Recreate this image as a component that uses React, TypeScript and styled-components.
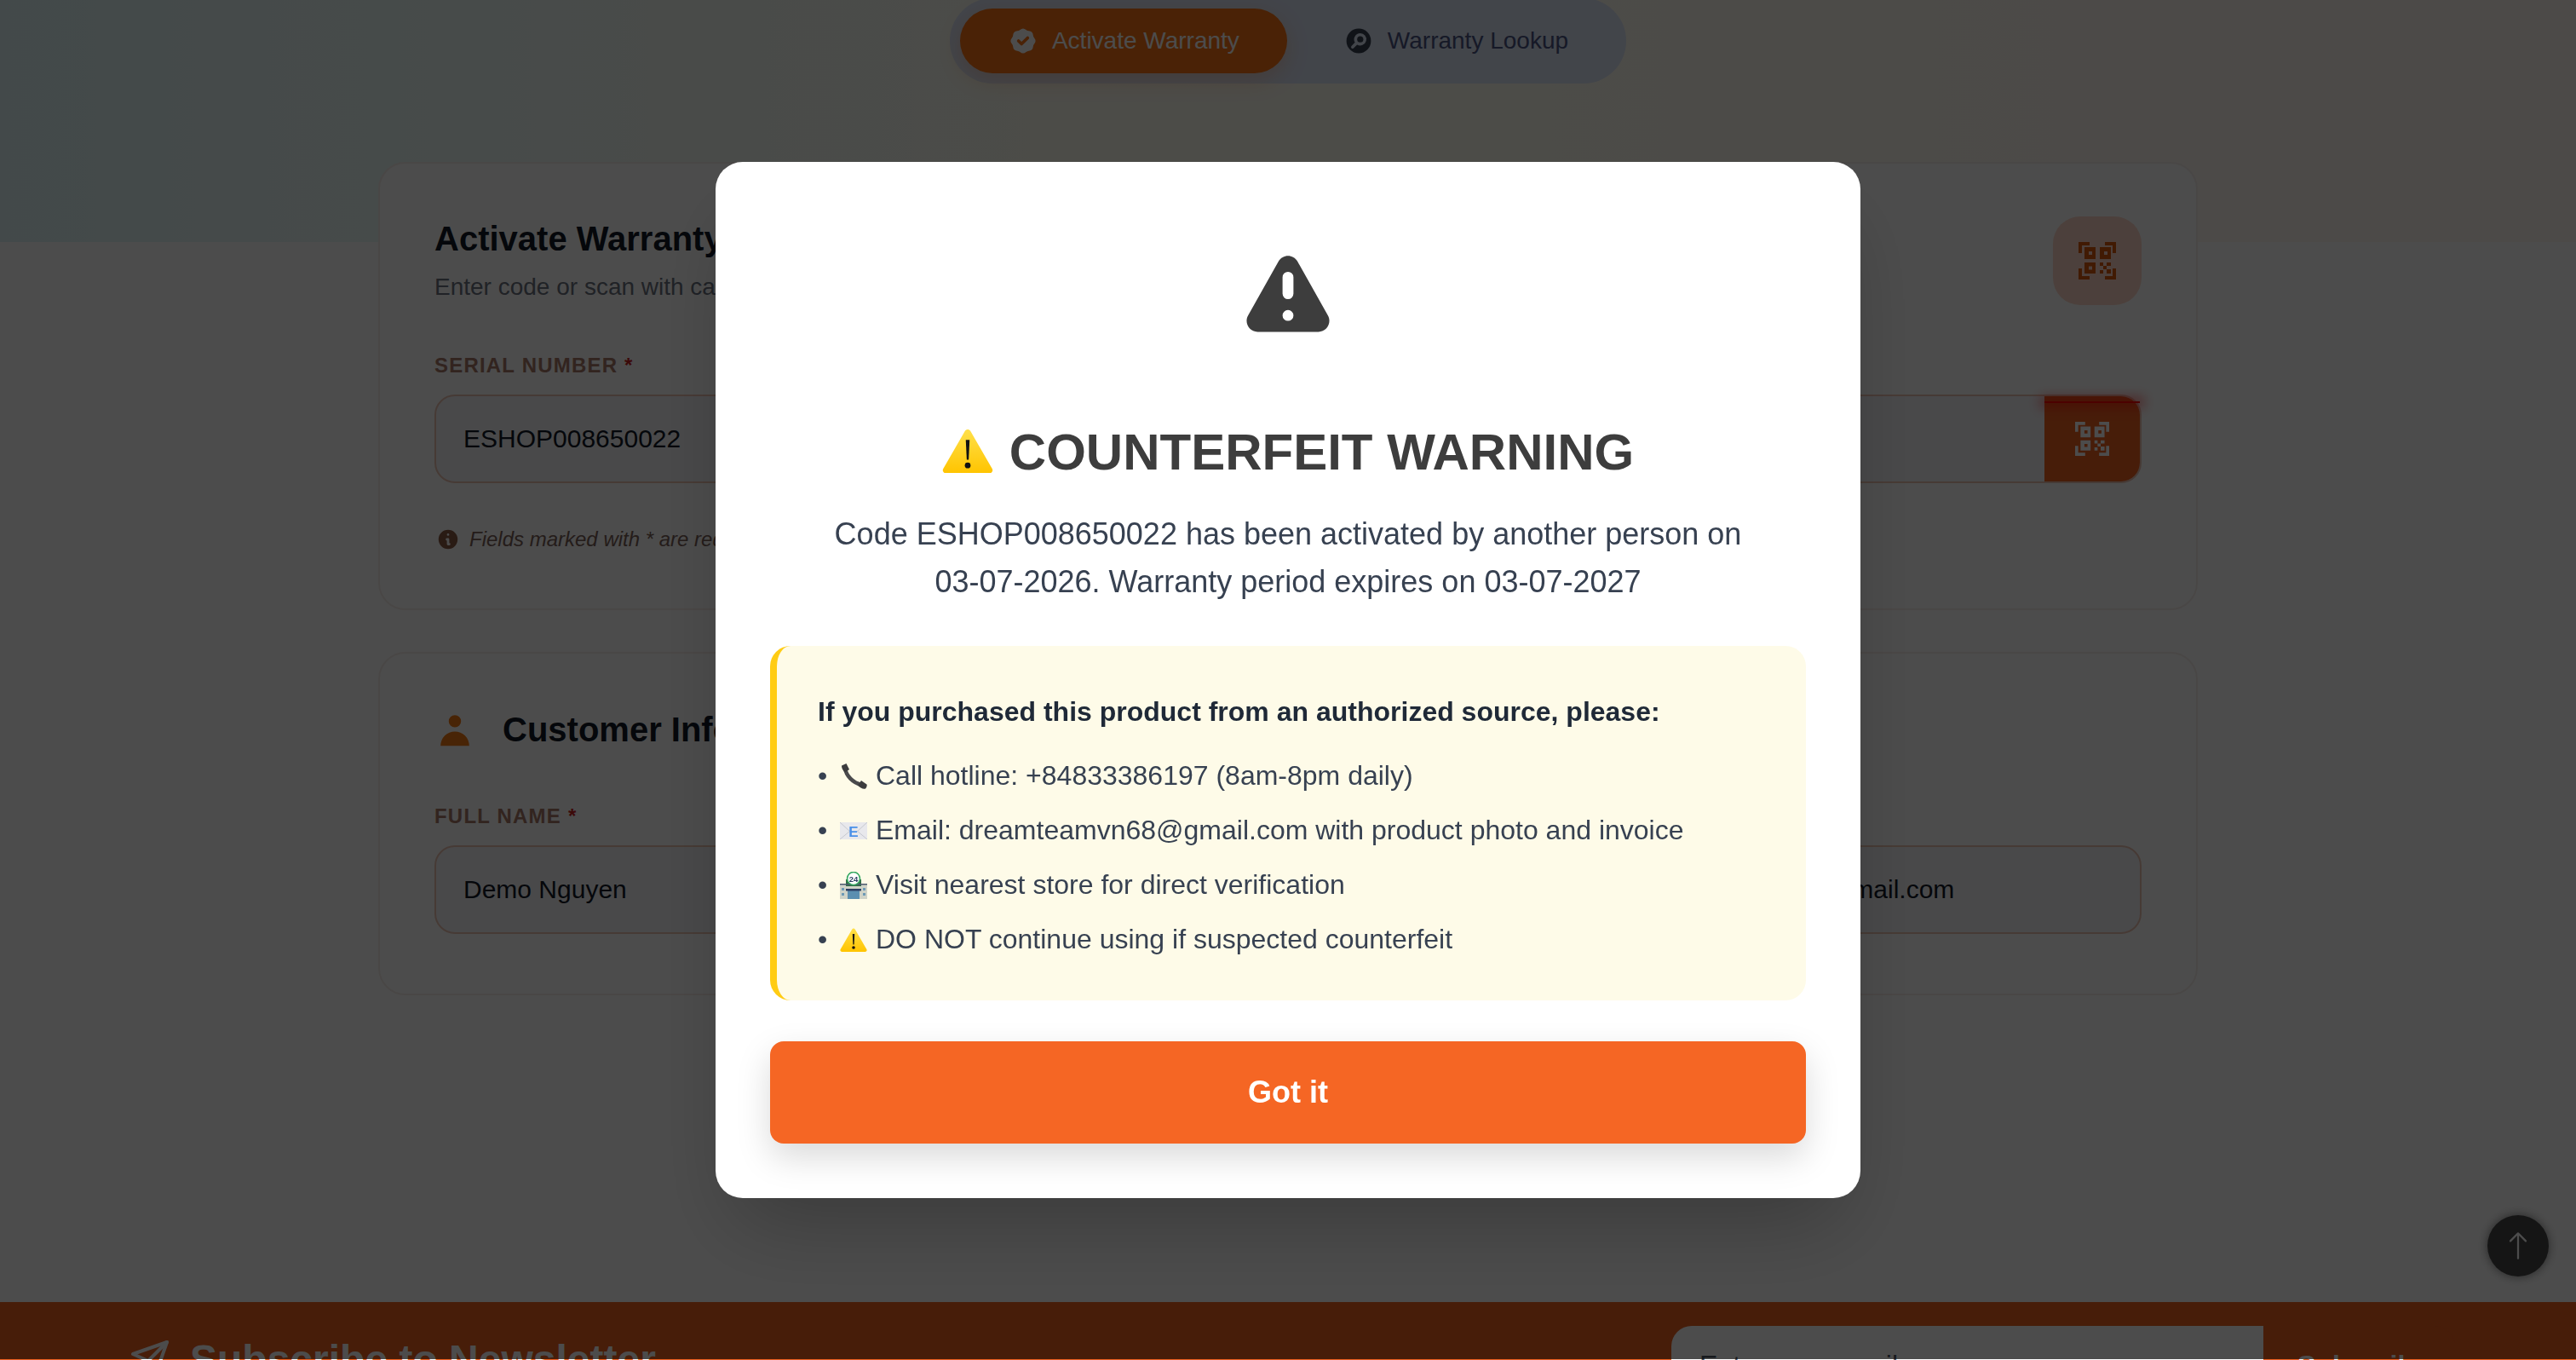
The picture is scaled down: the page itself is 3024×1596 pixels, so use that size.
import styled, { createGlobalStyle } from "styled-components";
import { HiBadgeCheck, HiExclamation, HiInformationCircle, HiSearchCircle, HiUser } from "react-icons/hi";
import { BsArrowUp } from "react-icons/bs";
import { FiSend } from "react-icons/fi";

function QrIcon({ size }: { size: number }) {
  return (
    <svg width={size} height={size} viewBox="0 0 44 44" fill="currentColor" fillRule="evenodd">
      <path d="M0 0h13v4H4v9H0zM44 0H31v4h9v9h4zM0 44h13v-4H4v-9H0zM44 44H31v-4h9v-9h4z" />
      <path d="M7 6h13v14H7zM12 11v4h4v-4zM25 6h13v14H25zM30 11v4h4v-4zM7 24h13v13H7zM12 28.500v4h4v-4z" />
      <path d="M25 24h4v4h-4zM33 24h5v4h-5zM29 28h4v4h-4zM33 32h5v5h-5zM25 33h4v4h-4z" />
    </svg>
  );
}

function WarnEmoji({ size }: { size: number }) {
  return (
    <svg width={size} height={size * 0.875} viewBox="0 0 64 56">
      <defs>
        <linearGradient id={`warn${size}`} x1="0" y1="0" x2="0" y2="1">
          <stop offset="0" stopColor="#ffe04a" />
          <stop offset="1" stopColor="#ffc400" />
        </linearGradient>
      </defs>
      <path d="M28.6 3 1.4 50c-1.6 2.8.3 6 3.4 6h54.4c3.1 0 5-3.2 3.4-6L35.400 3c-1.500-2.700-5.300-2.700-6.800 0z" fill={`url(#warn${size})`} />
      <path d="M29.600 14h4.800l-1.200 25h-2.400z" fill="#111" />
      <circle cx="32" cy="46" r="3.600" fill="#111" />
    </svg>
  );
}

function PhoneEmoji() {
  return (
    <svg width="32" height="32" viewBox="0 0 32 32">
      <path d="M6 6c1 9 9 18 20 20" fill="none" stroke="#4a4a4c" strokeWidth="4.500" strokeLinecap="round" />
      <path d="M2 3.500 7.500 1l3.500 7-5 3.500C3 9 2 6 2 3.500z" fill="#3c3c3e" />
      <path d="M21 26.500l4-5.500 6.500 4.500c.5 1 0 3.500-1.500 5-3 .8-6.500-1-9-4z" fill="#3c3c3e" />
    </svg>
  );
}

function MailEmoji() {
  return (
    <svg width="32" height="20" viewBox="0 0 32 20">
      <rect width="32" height="20" rx="1" fill="#e8e8ec" />
      <path d="M0 0l12 11M32 0 20 11M0 20l12-10M32 20 20 10" stroke="#c6c8cf" strokeWidth="1" />
      <text x="16" y="17" textAnchor="middle" fontFamily="Liberation Sans" fontWeight="700" fontSize="17" fill="#4a90e8">E</text>
    </svg>
  );
}

function StoreEmoji() {
  return (
    <svg width="32" height="32" viewBox="0 0 32 32">
      <rect x="0" y="15" width="32" height="17" fill="#cfd3c8" />
      <rect x="7" y="9" width="18" height="8" fill="#2f6b45" />
      <rect x="0" y="14" width="32" height="1.500" fill="#4c5a70" />
      <rect x="9" y="22" width="14" height="10" fill="#5b8fb0" />
      <rect x="7" y="20" width="18" height="2.500" fill="#2d3f63" />
      <rect x="2" y="19" width="3" height="3" fill="#6d9ab5" />
      <rect x="2" y="25" width="3" height="3" fill="#6d9ab5" />
      <rect x="27" y="19" width="3" height="3" fill="#6d9ab5" />
      <rect x="27" y="25" width="3" height="3" fill="#6d9ab5" />
      <circle cx="16" cy="8" r="7.500" fill="#fff" stroke="#35a860" strokeWidth="1.600" />
      <text x="16" y="11.500" textAnchor="middle" fontFamily="Liberation Sans" fontWeight="700" fontSize="9.500" fill="#2d3f63">24</text>
    </svg>
  );
}

export default function App() {
  return (
    <>
      <GlobalStyle />
      <Page>
        <Tabs>
          <Tab $active>
            <HiBadgeCheck size={36} />
            Activate Warranty
          </Tab>
          <Tab>
            <HiSearchCircle size={36} />
            Warranty Lookup
          </Tab>
        </Tabs>

        <Card>
          <CardHead>
            <div>
              <CardTitle>Activate Warranty</CardTitle>
              <CardSub>Enter code or scan with camera</CardSub>
            </div>
            <QrBox>
              <QrIcon size={44} />
            </QrBox>
          </CardHead>
          <Label>
            Serial Number <Req>*</Req>
          </Label>
          <InputShell>
            <Field readOnly value="ESHOP008650022" />
            <ScanButton>
              <ScanLine />
              <QrIcon size={40} />
            </ScanButton>
          </InputShell>
          <Hint>
            <HiInformationCircle size={28} />
            Fields marked with * are required
          </Hint>
        </Card>

        <Card $second>
          <SectionTitle>
            <HiUser size={48} />
            Customer Information
          </SectionTitle>
          <FieldGrid>
            <div>
              <Label>
                Full Name <Req>*</Req>
              </Label>
              <InputShell>
                <Field readOnly value="Demo Nguyen" />
              </InputShell>
            </div>
            <div>
              <Label>
                Phone Number <Req>*</Req>
              </Label>
              <InputShell>
                <Field readOnly value="0912345678" />
              </InputShell>
            </div>
            <div>
              <Label>Email</Label>
              <InputShell>
                <Field readOnly value="demo.nguyen12@gmail.com" />
              </InputShell>
            </div>
          </FieldGrid>
        </Card>

        <Footer>
          <FooterTitle>
            <FiSend size={48} />
            Subscribe to Newsletter
          </FooterTitle>
          <SubscribeForm>
            <EmailInput placeholder="Enter your email" />
            <SubscribeButton>Subscribe</SubscribeButton>
          </SubscribeForm>
        </Footer>

        <ScrollTop>
          <BsArrowUp size={36} />
        </ScrollTop>
      </Page>

      <Overlay>
        <Modal>
          <BigIcon>
            <HiExclamation size={128} />
          </BigIcon>
          <ModalTitle>
            <WarnEmoji size={60} />
            COUNTERFEIT WARNING
          </ModalTitle>
          <ModalText>
            Code ESHOP008650022 has been activated by another person on
            <br />
            03-07-2026. Warranty period expires on 03-07-2027
          </ModalText>
          <Notice>
            <NoticeHead>If you purchased this product from an authorized source, please:</NoticeHead>
            <NoticeItem>
              <Bullet>•</Bullet>
              <EmojiSlot><PhoneEmoji /></EmojiSlot>
              Call hotline: +84833386197 (8am-8pm daily)
            </NoticeItem>
            <NoticeItem>
              <Bullet>•</Bullet>
              <EmojiSlot><MailEmoji /></EmojiSlot>
              Email: dreamteamvn68@gmail.com with product photo and invoice
            </NoticeItem>
            <NoticeItem>
              <Bullet>•</Bullet>
              <EmojiSlot><StoreEmoji /></EmojiSlot>
              Visit nearest store for direct verification
            </NoticeItem>
            <NoticeItem>
              <Bullet>•</Bullet>
              <EmojiSlot><WarnEmoji size={32} /></EmojiSlot>
              DO NOT continue using if suspected counterfeit
            </NoticeItem>
          </Notice>
          <GotIt>Got it</GotIt>
        </Modal>
      </Overlay>
    </>
  );
}

const GlobalStyle = createGlobalStyle`
  html, body {
    margin: 0;
    height: 100%;
    overflow: hidden;
    background: #fff;
    font-family: "Liberation Sans", Arial, sans-serif;
  }
  * {
    box-sizing: border-box;
  }
`;

const Page = styled.div`
  position: relative;
  height: 1596px;
  overflow: hidden;
  display: flex;
  flex-direction: column;
  align-items: center;
  background:
    linear-gradient(90deg, #e0f6f8 0%, #eefbf8 18%, #fdfdf2 40%, #fffdf2 60%, #fff9f2 80%, #fff7f2 100%) top / 100% 284px no-repeat,
    #fff;
`;

const Tabs = styled.nav`
  display: flex;
  gap: 10px;
  height: 100px;
  margin-top: -2px;
  padding: 12px;
  border-radius: 50px;
  background: #dde6f8;
`;

const Tab = styled.div<{ $active?: boolean }>`
  display: flex;
  align-items: center;
  gap: 16px;
  height: 76px;
  padding: 0 56px;
  border-radius: 38px;
  font-size: 28px;
  color: ${(p) => (p.$active ? "#fff" : "#4b5583")};
  background: ${(p) => (p.$active ? "#f77214" : "transparent")};
  box-shadow: ${(p) => (p.$active ? "0 8px 24px rgba(247, 114, 20, 0.25)" : "none")};

  & svg {
    color: ${(p) => (p.$active ? "#fff" : "#374151")};
  }
`;

const Card = styled.section<{ $second?: boolean }>`
  width: 2136px;
  margin-top: ${(p) => (p.$second ? "49px" : "92px")};
  padding: ${(p) => (p.$second ? "62px 64px 70px" : "64px 64px 63px")};
  border: 2px solid #f6eeea;
  border-radius: 32px;
  background: #fff;
`;

const CardHead = styled.div`
  display: flex;
  justify-content: space-between;
  margin-bottom: 56px;
`;

const CardTitle = styled.h2`
  margin: 0;
  font-size: 40px;
  line-height: 48px;
  font-weight: 700;
  color: #111827;
`;

const CardSub = styled.p`
  margin: 15px 0 0;
  font-size: 28px;
  line-height: 36px;
  color: #6b7280;
`;

const QrBox = styled.div`
  display: flex;
  align-items: center;
  justify-content: center;
  width: 104px;
  height: 104px;
  margin-top: -2px;
  border-radius: 32px;
  background: #ffd8c8;
  color: #d9580a;
`;

const Label = styled.label`
  display: block;
  margin-bottom: 19px;
  font-size: 24px;
  line-height: 30px;
  font-weight: 700;
  letter-spacing: 1.200px;
  text-transform: uppercase;
  color: #a87868;
`;

const Req = styled.span`
  color: #c81e1e;
`;

const InputShell = styled.div`
  display: flex;
  height: 104px;
  border: 2px solid #ecc4b2;
  border-radius: 24px;
  background: #f4f4f8;
`;

const Field = styled.input`
  flex: 1;
  min-width: 0;
  padding: 0 32px;
  border: 0;
  outline: 0;
  background: transparent;
  font-family: inherit;
  font-size: 30px;
  color: #111827;
`;

const ScanButton = styled.div`
  position: relative;
  display: flex;
  align-items: center;
  justify-content: center;
  width: 112px;
  border-radius: 0 22px 22px 0;
  background: #ed6121;
  color: #fff;
`;

const ScanLine = styled.span`
  position: absolute;
  top: 6px;
  left: 0;
  right: 0;
  height: 2px;
  background: #ff0000;
  box-shadow: 0 0 14px 5px rgba(255, 0, 0, 0.5);
`;

const Hint = styled.p`
  display: flex;
  align-items: center;
  gap: 11px;
  margin: 48px 0 0;
  font-size: 24px;
  line-height: 36px;
  font-style: italic;
  color: #7a6058;

  & svg {
    margin-left: 2px;
    color: #8a5a44;
  }
`;

const SectionTitle = styled.h2`
  display: flex;
  align-items: center;
  gap: 32px;
  height: 54px;
  margin: 0 0 60px;
  font-size: 40px;
  font-weight: 700;
  color: #111827;

  & svg {
    color: #f07a14;
  }
`;

const FieldGrid = styled.div`
  display: grid;
  grid-template-columns: repeat(3, 1fr);
  gap: 48px;
`;

const Footer = styled.footer`
  display: flex;
  justify-content: space-between;
  align-self: stretch;
  margin-top: auto;
  height: 68px;
  padding: 28px 142px 0 156px;
  background: #ed6121;
`;

const FooterTitle = styled.h3`
  display: flex;
  gap: 23px;
  height: 56px;
  margin: 12px 0 0;
  font-size: 48px;
  line-height: 56px;
  font-weight: 700;
  color: #fff;

  & svg {
    flex: none;
    margin: 3px 0 0 -4px;
  }
`;

const SubscribeForm = styled.div`
  display: flex;
  height: 104px;
`;

const EmailInput = styled.input`
  width: 695px;
  padding: 0 33px 12px;
  border: 0;
  outline: 0;
  border-radius: 24px 0 0 24px;
  background: #fff;
  font-family: inherit;
  font-size: 32px;
  color: #111827;

  &::placeholder {
    color: #4b5563;
  }
`;

const SubscribeButton = styled.div`
  width: 225px;
  padding: 28px 0 0 40px;
  border-radius: 0 24px 24px 0;
  background: #ed6121;
  font-size: 32px;
  font-weight: 700;
  color: #fff;
`;

const ScrollTop = styled.div`
  position: absolute;
  right: 32px;
  bottom: 98px;
  display: flex;
  align-items: center;
  justify-content: center;
  width: 72px;
  height: 72px;
  border-radius: 50%;
  background: #494949;
  color: #fff;
  box-shadow: 0 0 12px rgba(0, 0, 0, 0.5);
`;

const Overlay = styled.div`
  position: fixed;
  inset: 0;
  z-index: 10;
  display: flex;
  align-items: center;
  justify-content: center;
  background: linear-gradient(rgba(0, 0, 0, 0.7), rgba(0, 0, 0, 0.7)) top / 100% 1595px no-repeat;
`;

const Modal = styled.div`
  width: 1344px;
  padding: 97px 64px 64px;
  border-radius: 32px;
  background: #fff;
  box-shadow: 0 50px 100px -24px rgba(0, 0, 0, 0.25);
`;

const BigIcon = styled.div`
  display: flex;
  justify-content: center;
  height: 128px;
  color: #3d3d3d;
`;

const ModalTitle = styled.h2`
  display: flex;
  align-items: center;
  justify-content: center;
  gap: 19px;
  margin: 80px 0 0;
  font-size: 60px;
  line-height: 72px;
  font-weight: 700;
  color: #3d3d3d;

  & svg {
    margin-bottom: 4px;
  }
`;

const ModalText = styled.p`
  margin: 32px 0 0;
  font-size: 36px;
  line-height: 56px;
  text-align: center;
  color: #374151;
`;

const Notice = styled.div`
  margin-top: 47px;
  padding: 52px 48px 46px;
  border-left: 8px solid #ffcc14;
  border-radius: 24px;
  background: #fefbe8;
`;

const NoticeHead = styled.p`
  margin: 0 0 24px;
  font-size: 32px;
  line-height: 51px;
  font-weight: 700;
  color: #1f2937;
`;

const NoticeItem = styled.div`
  display: flex;
  align-items: center;
  height: 51px;
  margin-top: 13px;
  font-size: 32px;
  color: #374151;
`;

const Bullet = styled.span`
  width: 26px;
`;

const EmojiSlot = styled.span`
  display: flex;
  justify-content: center;
  width: 32px;
  margin-right: 10px;
`;

const GotIt = styled.div`
  display: flex;
  align-items: center;
  justify-content: center;
  height: 120px;
  margin-top: 48px;
  border-radius: 16px;
  background: #f56624;
  box-shadow: 0 16px 40px rgba(0, 0, 0, 0.15);
  font-size: 36px;
  font-weight: 700;
  color: #fff;
`;
